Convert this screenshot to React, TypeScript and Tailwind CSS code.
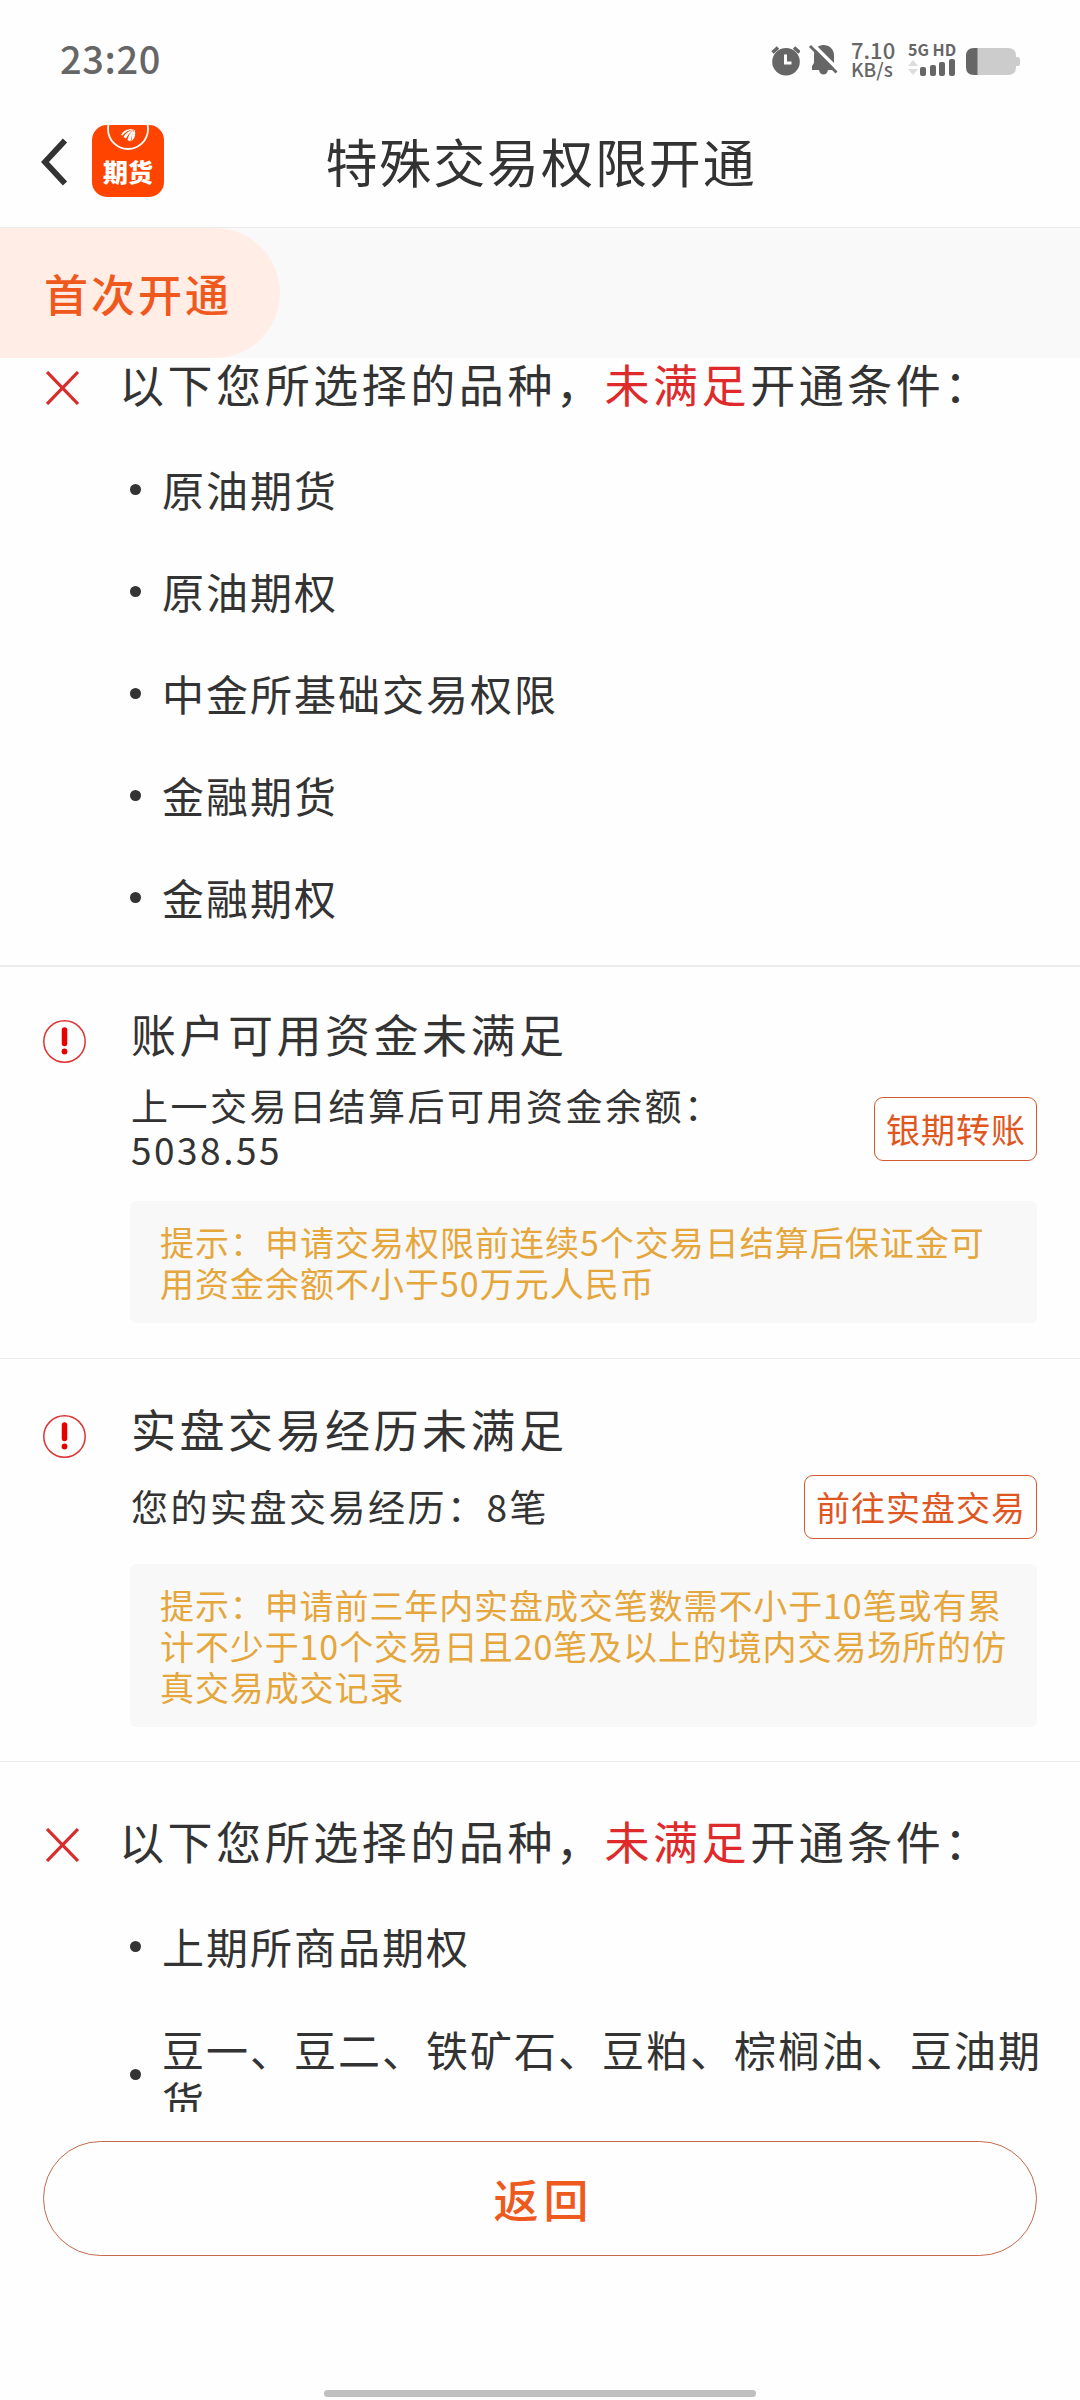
import React from "react";

function StatusBar() {
  return (
    <div className="flex h-[120px] items-start justify-between pl-[60px] pr-[60px]">
      <span className="mt-[30px] text-[38px] leading-[56px] font-medium tracking-[0.6px] text-[#666]">23:20</span>
      <div className="mt-[40px] flex items-start text-[#666]">
        <svg width="30" height="36" viewBox="0 0 30 36" className="mt-[3px]">
          <circle cx="16" cy="18.700" r="13.800" fill="#666" />
          <path d="M2.500 9.500 L8 4.500 M29.500 9.500 L24 4.500" stroke="#666" strokeWidth="3.600" />
          <path d="M15.500 11.500 V20 H21.500" stroke="#fff" strokeWidth="3" fill="none" />
        </svg>
        <svg width="29" height="34" viewBox="0 0 29 34" className="-mr-px ml-[9px] mt-[3px]">
          <path d="M3 26 V23 L5 20 V12 C5 6 9 2 14.500 2 C20 2 25 6 25 12 V27 H19 C18 33 11 33 10 27 H3 Z" fill="#666" />
          <path d="M3.500 1 L30 27.500" stroke="#fefefe" strokeWidth="3.500" />
          <path d="M1 3 L27.500 29.500" stroke="#666" strokeWidth="2.800" />
        </svg>
        <div className="mt-[-1px] ml-[14px] flex w-[45px] flex-col font-medium">
          <span className="text-[22px] leading-[20px]">7.10</span>
          <span className="text-[19px] leading-[19px] whitespace-nowrap">KB/s</span>
        </div>
        <div className="ml-[12px] flex w-[48px] flex-col">
          <span className="text-[16px] leading-[19px] font-bold whitespace-nowrap">5G HD</span>
          <svg width="48" height="17" viewBox="0 0 48 17">
            <path d="M0 7 L5 1 L10 7 Z M0 10 L5 16 L10 10 Z" fill="#ddd" />
            <g fill="#666">
              <rect x="12" y="8" width="6" height="9" rx="2" />
              <rect x="22" y="6" width="6" height="11" rx="2" />
              <rect x="31" y="3" width="6" height="14" rx="2" />
              <rect x="41" y="0" width="6" height="17" rx="2" />
            </g>
          </svg>
        </div>
        <svg width="54" height="27" viewBox="0 0 54 27" className="ml-[10px] mt-[8px]">
          <path d="M11 0 H42 Q50 0 50 8 V9 H51.500 Q54 9 54 11 V16 Q54 18 51.500 18 H50 V19 Q50 27 42 27 H11 Z" fill="#ccc" />
          <path d="M11.500 0 H8 Q0 0 0 8 V19 Q0 27 8 27 H11.500 Z" fill="#666" />
        </svg>
      </div>
    </div>
  );
}

function AppLogo() {
  return (
    <div className="relative mt-[5px] ml-[24px] h-[72px] w-[72px] overflow-hidden rounded-[15px] bg-[#ff4400]">
      <svg width="72" height="72" viewBox="0 0 72 72" className="absolute inset-0">
        <circle cx="36" cy="4" r="20" fill="none" stroke="#fff" strokeWidth="1.800" />
        <g fill="#fff">
          <path d="M29 10 C31 5.500 36 3.500 42 4 C37 5 33 7 30.500 10.500 Z" />
          <path d="M31.500 12 C33.500 8 37 5.500 42 4.500 C38.500 7 35.500 10 34 13.500 Z" />
          <path d="M35.500 15 C36.500 10.500 38.500 7 42 5 C40.500 9 39 12.500 38.500 16.500 Z" />
          <path d="M39.500 16 C39.500 11.500 40.500 8 42.500 4.500 C44 9 43 13.500 39.500 16 Z" />
        </g>
      </svg>
      <span className="absolute top-[33px] left-[11px] text-[25px] leading-[27px] font-black whitespace-nowrap text-white">期货</span>
    </div>
  );
}

function Header() {
  return (
    <div className="relative flex h-[108px] items-start border-b border-[#ebebeb] pl-[41px]">
      <svg width="27" height="48" viewBox="0 0 27 48" className="mt-[18px]">
        <path d="M24 2.500 L4 24 L24 45.500" fill="none" stroke="#333" strokeWidth="5.800" />
      </svg>
      <AppLogo />
      <h1 className="absolute inset-x-0 top-[5px] pl-[2px] text-center text-[52px] leading-[72px] tracking-[1.900px]">特殊交易权限开通</h1>
    </div>
  );
}

function UnmetHeading() {
  return (
    <div className="flex h-[56px] items-center pl-[46px]">
      <svg width="33" height="34" viewBox="0 0 33 34" className="mt-[4px]">
        <path d="M1 1 L32 33 M32 1 L1 33" stroke="#d92c2c" strokeWidth="3.200" />
      </svg>
      <span className="mt-[-5px] ml-[40px] text-[45px] leading-[56px] tracking-[3.550px] whitespace-nowrap">
        以下您所选择的品种，<span className="text-[#de2a2a]">未满足</span>开通条件：
      </span>
    </div>
  );
}

function Item({ children, tall }: { children: React.ReactNode; tall?: boolean }) {
  return (
    <li className={tall ? "flex h-[154px] items-center" : "flex h-[102px] items-center"}>
      <span className="mt-[-1px] ml-[130px] h-[11px] w-[11px] shrink-0 rounded-full bg-[#333]" />
      <span className="mt-[-3px] ml-[21px] text-[42px] leading-[51px] tracking-[2px] whitespace-nowrap">{children}</span>
    </li>
  );
}

function Warning() {
  return (
    <svg width="43" height="43" viewBox="0 0 43 43" className="mt-[9px] ml-[43px] shrink-0">
      <circle cx="21.500" cy="21.500" r="20.700" fill="none" stroke="#d33" strokeWidth="1.500" />
      <path d="M21.500 10 V23.500" stroke="#e60000" strokeWidth="5.500" strokeLinecap="round" />
      <circle cx="21.500" cy="31.500" r="2.900" fill="#e60000" />
    </svg>
  );
}

type ConditionProps = {
  title: string;
  detail: React.ReactNode;
  action: string;
  hint: React.ReactNode;
  first?: boolean;
};

function Condition({ title, detail, action, hint, first }: ConditionProps) {
  return (
    <section className={first ? "flex h-[393px] border-t-2 border-[#ebebeb] pt-[44px]" : "flex h-[403px] border-t border-[#ebebeb] pt-[47px]"}>
      <Warning />
      <div className="mr-[43px] ml-[44px] flex-1">
        <h2 className="ml-[1px] h-[50px] text-[45px] leading-[46px] tracking-[3.500px]">{title}</h2>
        <div className={first ? "mt-[24px] flex h-[88px] items-center justify-between" : "mt-[18px] flex h-[66px] items-center justify-between"}>
          <p className={first ? "mt-[-5px] ml-[1px] text-[37px] leading-[44px] tracking-[2.500px]" : "mt-[-3px] ml-[1px] text-[37px] leading-[44px] tracking-[2.500px]"}>{detail}</p>
          <button className="mt-[-1px] h-[64px] rounded-[9px] border border-[#cf5a30] pr-[10px] pl-[11px] text-[34px] leading-[60px] tracking-[1px] whitespace-nowrap text-[#e0561f]">{action}</button>
        </div>
        <p className={first ? "mt-[28px] h-[122px] rounded-[6px] bg-[#f8f8f8] pt-[20px] pl-[30px] text-[34px] leading-[41px] tracking-[1px] whitespace-nowrap text-[#e5a63c]" : "mt-[24px] h-[163px] rounded-[6px] bg-[#f8f8f8] pt-[20px] pl-[30px] text-[34px] leading-[41px] tracking-[0.900px] whitespace-nowrap text-[#e5a63c]"}>{hint}</p>
      </div>
    </section>
  );
}

export default function App() {
  return (
    <main lang="zh-CN" className="flex h-[2400px] w-[1080px] flex-col overflow-hidden bg-[#fefefe] font-['Noto_Sans_CJK_SC',sans-serif] text-[#333]">
      <StatusBar />
      <Header />
      <div className="h-[130px] shrink-0 bg-[#f9f9f9]">
        <div className="flex h-[130px] w-[280px] items-center rounded-r-full bg-[#ffede6] pl-[44px] text-[44px] font-medium tracking-[3px] text-[#f0591d]">首次开通</div>
      </div>
      <div className="h-[1754px] shrink-0 overflow-hidden">
        <UnmetHeading />
        <ul className="mt-[25px] h-[526px]">
          <Item>原油期货</Item>
          <Item>原油期权</Item>
          <Item>中金所基础交易权限</Item>
          <Item>金融期货</Item>
          <Item>金融期权</Item>
        </ul>
        <Condition
          first
          title="账户可用资金未满足"
          detail={<>上一交易日结算后可用资金余额：<br />5038.55</>}
          action="银期转账"
          hint={<>提示：申请交易权限前连续5个交易日结算后保证金可<br />用资金余额不小于50万元人民币</>}
        />
        <Condition
          title="实盘交易经历未满足"
          detail="您的实盘交易经历：8笔"
          action="前往实盘交易"
          hint={<>提示：申请前三年内实盘成交笔数需不小于10笔或有累<br />计不少于10个交易日且20笔及以上的境内交易场所的仿<br />真交易成交记录</>}
        />
        <div className="border-t border-[#ebebeb] pt-[53px]">
          <UnmetHeading />
          <ul className="mt-[25px]">
            <Item>上期所商品期权</Item>
            <Item tall>豆一、豆二、铁矿石、豆粕、棕榈油、豆油期<br />货</Item>
          </ul>
        </div>
      </div>
      <button className="mx-[43px] mt-[29px] h-[115px] shrink-0 rounded-full border border-[#c4694a] pl-[7px] text-[45px] leading-[111px] font-medium tracking-[5px] text-[#ee5a1e]">返回</button>
      <div className="mx-auto mt-[134px] h-[7px] w-[432px] shrink-0 rounded-full bg-[#bfbfbf]" />
    </main>
  );
}
